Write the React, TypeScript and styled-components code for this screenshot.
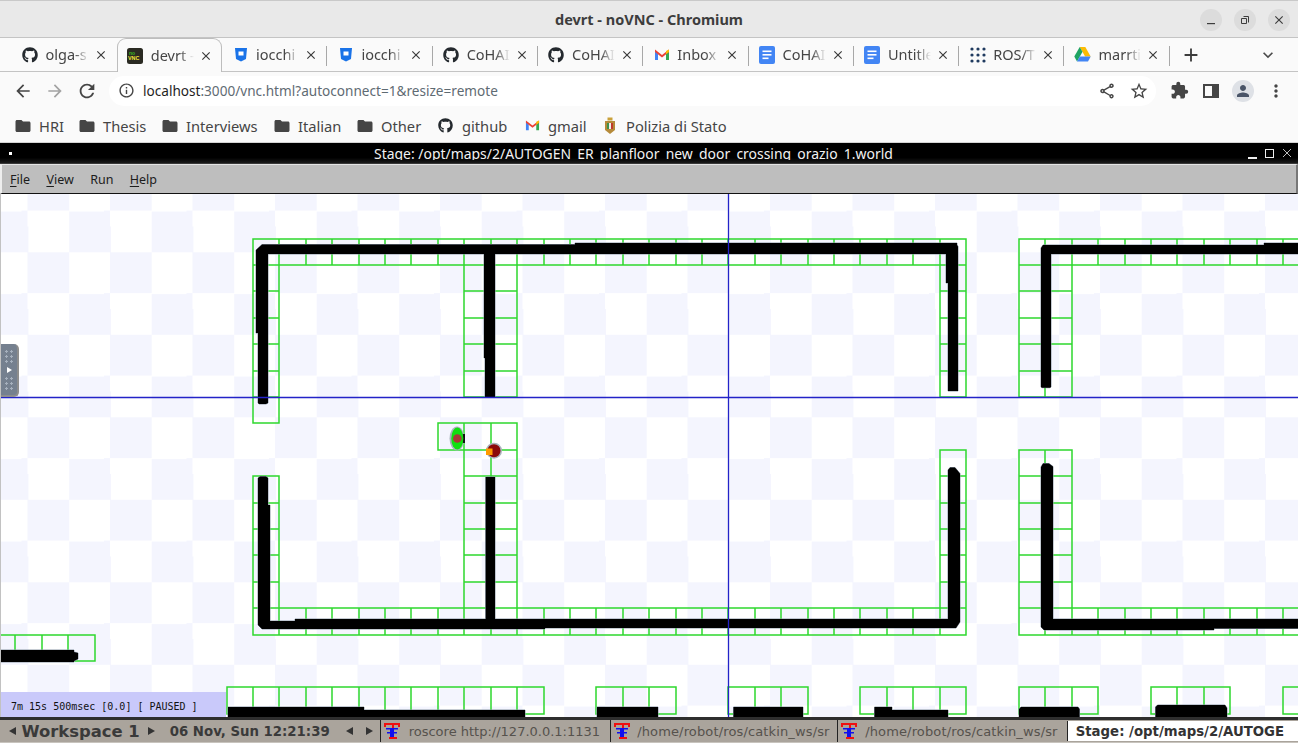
import type { ReactNode } from 'react';
import styled, { createGlobalStyle } from 'styled-components';
import { FaGithub } from 'react-icons/fa';
import {
  MdAdd,
  MdArrowBack,
  MdArrowForward,
  MdClose,
  MdExpandMore,
  MdExtension,
  MdFolder,
  MdMoreVert,
  MdOutlineInfo,
  MdOutlineShare,
  MdPerson,
  MdRefresh,
  MdStarBorder,
} from 'react-icons/md';

const UI_FONT = '"Noto Sans", "Open Sans", sans-serif';
const X11_FONT = '"DejaVu Sans", sans-serif';

const GlobalStyle = createGlobalStyle`
  html, body { margin: 0; padding: 0; background: #fff; overflow: hidden; }
  * { box-sizing: border-box; }
`;

const Screen = styled.div`
  width: 1298px;
  height: 743px;
  display: flex;
  flex-direction: column;
  overflow: hidden;
  font-family: ${UI_FONT};
`;

/* window title */
const TitleBar = styled.header`
  height: 37px;
  flex: none;
  display: flex;
  align-items: center;
  justify-content: flex-end;
  gap: 12px;
  padding: 1px 8px 0 0;
  position: relative;
  background: #e9e9e9;
  border-top: 1px solid #c9c9c9;
`;

const WindowName = styled.div`
  position: absolute;
  left: 0;
  right: 0;
  top: 9px;
  text-align: center;
  font-size: 14.5px;
  line-height: 18px;
  font-weight: 700;
  color: #3d3d3d;
`;

const RoundButton = styled.button`
  width: 22px;
  height: 22px;
  padding: 0;
  border: 0;
  border-radius: 50%;
  background: #dcdcdc;
  color: #3d3d3d;
  display: flex;
  align-items: center;
  justify-content: center;
`;

/* tabs */
const TabStrip = styled.nav`
  height: 35px;
  flex: none;
  display: flex;
  align-items: stretch;
  padding-left: 11.5px;
  background: #fafafa;
  border-top: 1px solid #c4c4c4;
  border-bottom: 1px solid #c4c4c4;
`;

const Tab = styled.div<{ $active?: boolean; $divider?: boolean }>`
  width: 105.3px;
  flex: none;
  display: flex;
  align-items: center;
  padding-left: 10px;
  position: relative;
  color: #454545;
  ${(p) =>
    p.$active
      ? `
    background: #fafafa;
    border: 1px solid #bdbdbd;
    border-bottom: 0;
    border-radius: 9px 9px 0 0;
    margin-bottom: -1px;
    padding-left: 9px;
  `
      : ''}
  ${(p) =>
    p.$divider
      ? `
    &::after {
      content: '';
      position: absolute;
      right: 0;
      top: 8px;
      bottom: 5px;
      width: 1px;
      background: #a8a8a8;
    }
  `
      : ''}
`;

const TabIcon = styled.span`
  width: 17px;
  height: 17px;
  flex: none;
  display: flex;
  align-items: center;
  justify-content: center;
  color: #24292e;
`;

const TabTitle = styled.span`
  width: 43px;
  margin: -1px 0 0 7px;
  flex: none;
  overflow: hidden;
  white-space: nowrap;
  font-size: 14.5px;
  line-height: 20px;
  mask-image: linear-gradient(to right, #000 66%, transparent 100%);
`;

const TabClose = styled.span`
  margin-left: 4px;
  width: 16px;
  height: 16px;
  display: flex;
  align-items: center;
  justify-content: center;
  color: #3a3a3a;
`;

const NewTab = styled.div`
  width: 41.5px;
  flex: none;
  display: flex;
  align-items: center;
  justify-content: center;
  color: #3c3c3c;
`;

const TabMenu = styled.div`
  margin-left: 47px;
  display: flex;
  align-items: center;
  color: #4a4a4a;
`;

/* address bar */
const Toolbar = styled.div`
  height: 37px;
  flex: none;
  display: flex;
  align-items: center;
  background: #fafafa;
  padding: 0 0 0 7px;
  color: #454545;
`;

const NavButton = styled.span<{ $muted?: boolean }>`
  width: 32px;
  height: 24px;
  flex: none;
  display: flex;
  align-items: center;
  justify-content: center;
  color: ${(p) => (p.$muted ? '#a3a3a3' : '#454545')};
`;

const Omnibox = styled.div`
  margin-left: 6px;
  width: 1047px;
  height: 30px;
  flex: none;
  display: flex;
  align-items: center;
  padding: 0 0 0 9px;
  border-radius: 15px;
  background: #fff;
`;

const Url = styled.div`
  margin-left: 8px;
  flex: 1;
  font-size: 13.6px;
  white-space: nowrap;
  color: #5f6b73;
`;

const UrlHost = styled.span`
  color: #1f1f1f;
`;

const OmniActions = styled.div`
  display: flex;
  align-items: center;
  gap: 13px;
  padding-right: 7px;
`;

const ToolActions = styled.div`
  margin-left: 7px;
  display: flex;
  align-items: center;
`;

const Avatar = styled.span`
  width: 22px;
  height: 22px;
  margin: 0 6px 0 5px;
  border-radius: 50%;
  background: #dee1e6;
  color: #4a5568;
  display: flex;
  align-items: center;
  justify-content: center;
`;

/* bookmarks */
const Bookmarks = styled.div`
  height: 34px;
  flex: none;
  display: flex;
  align-items: center;
  background: #fafafa;
  border-bottom: 1px solid #d4d4d4;
`;

const Bookmark = styled.div<{ $w: number; $gap: number }>`
  width: ${(p) => p.$w}px;
  flex: none;
  padding-left: 14px;
  display: flex;
  align-items: center;
  gap: ${(p) => p.$gap}px;
  color: #454545;
  font-size: 14.7px;
  white-space: nowrap;
`;

/* remote session */
const VncTitle = styled.div`
  height: 21px;
  flex: none;
  display: flex;
  position: relative;
  align-items: flex-start;
  background: linear-gradient(#000 0, #000 70%, #1a1a1a 95%, #555 100%);
  color: #f2f2f2;
`;

const VncDot = styled.span`
  position: absolute;
  left: 9px;
  top: 9px;
  width: 3px;
  height: 3px;
  background: #fff;
`;

const VncName = styled.div`
  margin: 3px 0 0 374px;
  height: 14px;
  overflow: hidden;
  font-size: 13.95px;
  line-height: 16px;
  white-space: nowrap;
`;

const VncButtons = styled.svg`
  position: absolute;
  right: 0;
  top: 0;
`;

const MenuBar = styled.div`
  height: 30px;
  flex: none;
  display: flex;
  align-items: center;
  gap: 16.4px;
  padding: 1px 0 0 8px;
  background: #bebebe;
  border-top: 1px solid #e4e4e4;
  border-left: 2px solid #eee;
  border-right: 2px solid #777;
  border-bottom: 1px solid #111;
  font-size: 12.5px;
  color: #1c1c1c;
`;

const MenuKey = styled.span`
  text-decoration: underline;
  text-underline-offset: 2px;
`;

const Canvas = styled.main`
  flex: 1;
  min-height: 0;
  position: relative;
  overflow: hidden;
  border-left: 1px solid #c2c2c2;
  background-color: #fff;
  background-image: repeating-conic-gradient(#f4f5fe 0 25%, #fff 0 50%);
  background-size: 82.5px 82.5px;
  background-position: -14.3px -24.2px;
`;

const MapSvg = styled.svg`
  display: block;
  width: 1298px;
  height: 523px;
  margin-left: -1px;
`;

const StatusBox = styled.div`
  position: absolute;
  left: -1px;
  bottom: 0;
  width: 226px;
  height: 25px;
  padding: 8px 0 0 11px;
  background: #c9c9fa;
  font-family: "DejaVu Sans Mono", monospace;
  font-size: 10px;
  line-height: 14px;
  color: #111;
  white-space: pre;
`;

const Handle = styled.div`
  position: absolute;
  left: 0;
  top: 150px;
  width: 18px;
  height: 53px;
  display: flex;
  flex-direction: column;
  align-items: center;
  justify-content: center;
  gap: 3px;
  background: #75808f;
  border: solid #8d8d8d;
  border-width: 0 2px 2px 0;
  border-radius: 0 5px 5px 0;
`;

const HandleGrip = styled.span`
  width: 10px;
  height: 15px;
  background-image: radial-gradient(#a6b0bd 1px, transparent 1.2px);
  background-size: 5px 5px;
`;

const HandleArrow = styled.span`
  width: 0;
  height: 0;
  border-left: 5px solid #fff;
  border-top: 3.5px solid transparent;
  border-bottom: 3.5px solid transparent;
`;

/* desktop panel */
const Panel = styled.footer`
  height: 26px;
  flex: none;
  display: flex;
  align-items: center;
  background: #aaa49c;
  border-top: 3px solid #2e2e2e;
  border-bottom: 1px solid #c8c4be;
  font-family: ${X11_FONT};
  color: #3a3a3a;
  white-space: nowrap;
`;

const PanelArrow = styled.span<{ $dir: 'left' | 'right'; $gap?: number }>`
  flex: none;
  width: 0;
  height: 0;
  margin-left: ${(p) => p.$gap ?? 0}px;
  border-top: 4.5px solid transparent;
  border-bottom: 4.5px solid transparent;
  ${(p) => (p.$dir === 'left' ? 'border-right: 7.5px solid #333;' : 'border-left: 7.5px solid #333;')}
`;

const Workspace = styled.span`
  margin-left: 6px;
  font-size: 16.4px;
  font-weight: 700;
`;

const Clock = styled.span`
  margin-left: 15px;
  font-size: 13.3px;
  font-weight: 700;
`;

const TaskList = styled.div`
  margin-left: 7px;
  flex: none;
  display: flex;
`;

const TaskItem = styled.div<{ $w: number }>`
  width: ${(p) => p.$w}px;
  flex: none;
  height: 22px;
  display: flex;
  align-items: center;
  border-left: 1px solid #222;
  padding-left: 2px;
  overflow: hidden;
  font-size: 13px;
  color: #56524d;
`;

const TaskLabel = styled.span<{ $gap: number; $track?: number }>`
  margin-left: ${(p) => p.$gap}px;
  letter-spacing: ${(p) => p.$track ?? 0}px;
`;

const ActiveTask = styled.div`
  flex: 1;
  height: 20px;
  margin-left: 1px;
  padding-left: 8px;
  display: flex;
  align-items: center;
  overflow: hidden;
  background: #fff;
  border-left: 1px solid #222;
  font-size: 13.3px;
  font-weight: 700;
  color: #333;
`;

/* icons */
const ShieldIcon = () => (
  <svg width="14" height="15" viewBox="0 0 14 15">
    <path d="M1 1h12l-1 11-5 2.5L2 12z" fill="#1a73e8" />
    <rect x="4.5" y="4.5" width="5" height="4" fill="#fff" />
  </svg>
);

const NoVncIcon = () => (
  <svg width="16" height="16" viewBox="0 0 16 16">
    <rect width="16" height="16" rx="2.5" fill="#2a2a22" />
    <text x="2" y="6.5" fontSize="5" fontWeight="700" fontFamily="Liberation Sans" fill="#3cb521">
      no
    </text>
    <text x="1" y="12" fontSize="5.4" fontWeight="700" fontFamily="Liberation Sans" fill="#f4e93a">
      VNC
    </text>
  </svg>
);

const GmailIcon = ({ size = 16 }: { size?: number }) => (
  <svg width={size} height={size} viewBox="0 0 16 16">
    <path d="M1 4v9h3V7z" fill="#4285f4" />
    <path d="M12 7v6h3V4z" fill="#34a853" />
    <path d="M1 2.6 8 8l7-5.4V5L8 10.5 1 5z" fill="#ea4335" />
    <path d="M12 3.9 15 2.6V5l-3 2.3z" fill="#fbbc04" />
  </svg>
);

const DocsIcon = () => (
  <svg width="16" height="18" viewBox="0 0 16 18">
    <rect width="16" height="18" rx="2" fill="#4285f4" />
    <rect x="3.5" y="4.5" width="9" height="1.6" fill="#fff" />
    <rect x="3.5" y="8" width="9" height="1.6" fill="#fff" />
    <rect x="3.5" y="11.5" width="6" height="1.6" fill="#fff" />
  </svg>
);

const DotsIcon = () => (
  <svg width="16" height="16" viewBox="0 0 16 16" fill="#1f3a5f">
    {[2, 8, 14].flatMap((y) =>
      [2, 8, 14].map((x) => <circle key={`${x}-${y}`} cx={x} cy={y} r="1.6" />),
    )}
  </svg>
);

const DriveIcon = () => (
  <svg width="17" height="15" viewBox="0 0 17 15">
    <path d="M5.7 0h5.6l5.4 9.6h-5.6z" fill="#fbbc04" />
    <path d="M5.7 0 0.3 9.6 3 14.5l5.5-9.7z" fill="#1fa463" />
    <path d="M5.8 9.6h10.9L14 14.5H3z" fill="#4285f4" />
  </svg>
);

const CrestIcon = () => (
  <svg width="12" height="18" viewBox="0 0 12 18">
    <rect x="3.5" y="0.5" width="5" height="3" fill="#c9a13b" />
    <path d="M1 4h10v9l-5 4-5-4z" fill="#b58a3a" />
    <rect x="3" y="6" width="2" height="6" fill="#3f8f4a" />
    <rect x="5" y="6" width="2" height="6" fill="#eee" />
    <rect x="7" y="6" width="2" height="6" fill="#c0392b" />
  </svg>
);

const SidePanelIcon = () => (
  <svg width="16" height="14" viewBox="0 0 16 14">
    <path d="M0 0h16v14H0zM2 2v10h7V2z" fill="#454545" fillRule="evenodd" />
  </svg>
);

const XtermIcon = () => (
  <svg width="18" height="18" viewBox="0 0 18 18">
    <path d="M1 1h16v4h-2V3h-4v12h3v2H6v-2h3V3H3v2H1z" fill="#f01010" />
    <path d="M3 6h12v1.500h-4V15H7V7.500H3z" fill="#1010ee" />
    <rect x="4" y="10" width="10" height="1.500" fill="#1010ee" />
  </svg>
);

/* map */
const gx = (n: number) => Math.round(253 + 26.41 * n);
const gy = (m: number) => Math.round(238.5 + 26.4 * m);

// [first col, last col (exclusive), first row, last row (exclusive)]
const GRID_BLOCKS: [number, number, number, number][] = [
  [0, 27, 0, 1],
  [0, 1, 1, 7],
  [8, 10, 1, 6],
  [26, 27, 1, 6],
  [29, 40, 0, 1],
  [29, 31, 1, 6],
  [7, 10, 7, 8],
  [8, 10, 8, 15],
  [0, 1, 9, 15],
  [0, 27, 14, 15],
  [26, 27, 8, 15],
  [29, 31, 8, 15],
  [29, 40, 14, 15],
  [-10, -6, 15, 16],
  [-1, 11, 17, 18],
  [13, 16, 17, 18],
  [18, 21, 17, 18],
  [23, 27, 17, 18],
  [29, 32, 17, 18],
  [34, 37, 17, 18],
  [39, 40, 17, 18],
];

const WALLS: string[] = [
  // upper left room
  'M256 333V250l6-5.500H575v-1.500H957v2l1 1.500V391H948V283H946V254H268V403l-2 1h-7l-1-1V333z',
  'M484 254H495V397H485V358H484z',
  // upper right room
  'M1041 387V248l2-3H1264v-2H1298V254H1051V387l-1 .7h-8z',
  // lower left room
  'M258 478l2-1.500h6l2 1.500V505h2V621H295V619H948V628H545v1H262l-4-4z',
  'M485.700 477H495V620H485.700z',
  // lower right room
  'M948 470l2-2.500h5l5 6V622l-4 6-8 0zM1041 467l2-3.500h6l4 3V619H1298V628.500H1214V630H1044l-3-3z',
  // bottom strips
  'M0 650H74V652L78 653V659L74 661V662H0z',
  'M228 707H364V710H525V717H228z',
  'M597 707H658V717H597z',
  'M733.500 707H803V717H733.500z',
  'M874.500 707H892V710H948V717H874.500z',
  'M1019 709l2-2H1078l1.500 2V717H1019z',
  'M1155.500 707l2-2H1225l2 3V717H1155.500z',
];

const GridLines = () => {
  const lines: string[] = [];
  GRID_BLOCKS.forEach(([c0, c1, r0, r1]) => {
    for (let c = c0; c <= c1; c += 1) lines.push(`M${gx(c)} ${gy(r0)}V${gy(r1)}`);
    for (let r = r0; r <= r1; r += 1) lines.push(`M${gx(c0)} ${gy(r)}H${gx(c1)}`);
  });
  return <path d={lines.join('')} stroke="#2ed82e" strokeWidth="1.500" fill="none" strokeLinecap="square" />;
};

const SimMap = () => (
  <MapSvg viewBox="0 194 1298 523">
    <GridLines />
    <path d={WALLS.join('')} stroke="#8b97a5" strokeWidth="1" fill="none" />
    <path d={WALLS.join('')} fill="#000" />
    <path d="M728.500 194V717M0 397.500H1298" stroke="#2323c8" strokeWidth="1.300" fill="none" />
    <ellipse cx="457" cy="438.500" rx="7.500" ry="12" fill="#a9b2bb" />
    <rect x="462.500" y="434" width="2.500" height="9" fill="#111" />
    <ellipse cx="457.300" cy="438.500" rx="6" ry="11" fill="#10e010" />
    <circle cx="457.300" cy="438.500" r="4.300" fill="#a83838" />
    <circle cx="494" cy="450.700" r="8" fill="#a9b2bb" />
    <circle cx="494" cy="450.700" r="6.500" fill="#8c0a0a" />
    <rect x="486" y="448.500" width="6.500" height="6.500" fill="#ff9a00" />
  </MapSvg>
);

const TABS: { title: string; icon: ReactNode }[] = [
  { title: 'olga-s', icon: <FaGithub size={16} /> },
  { title: 'devrt -', icon: <NoVncIcon /> },
  { title: 'iocchi', icon: <ShieldIcon /> },
  { title: 'iocchi', icon: <ShieldIcon /> },
  { title: 'CoHAI', icon: <FaGithub size={16} /> },
  { title: 'CoHAI', icon: <FaGithub size={16} /> },
  { title: 'Inbox', icon: <GmailIcon /> },
  { title: 'CoHAI', icon: <DocsIcon /> },
  { title: 'Untitle', icon: <DocsIcon /> },
  { title: 'ROS/T', icon: <DotsIcon /> },
  { title: 'marrti', icon: <DriveIcon /> },
];

const BOOKMARKS: { label: string; width: number; gap: number; icon: ReactNode }[] = [
  { label: 'HRI', width: 64, gap: 7, icon: <MdFolder size={18} /> },
  { label: 'Thesis', width: 83, gap: 7, icon: <MdFolder size={18} /> },
  { label: 'Interviews', width: 112, gap: 7, icon: <MdFolder size={18} /> },
  { label: 'Italian', width: 83, gap: 7, icon: <MdFolder size={18} /> },
  { label: 'Other', width: 82, gap: 7, icon: <MdFolder size={18} /> },
  { label: 'github', width: 87, gap: 9, icon: <FaGithub size={15} color="#24292e" /> },
  { label: 'gmail', width: 79, gap: 8, icon: <GmailIcon size={15} /> },
  { label: 'Polizia di Stato', width: 160, gap: 10, icon: <CrestIcon /> },
];

export default function App() {
  return (
    <Screen>
      <GlobalStyle />
      <TitleBar>
        <WindowName>devrt - noVNC - Chromium</WindowName>
        <RoundButton>
          <svg width="10" height="10" viewBox="0 0 10 10">
            <rect x="1" y="8" width="8" height="1.200" fill="#3d3d3d" />
          </svg>
        </RoundButton>
        <RoundButton>
          <svg width="10" height="10" viewBox="0 0 10 10" fill="none" stroke="#3d3d3d">
            <path d="M3.500 1.500h5v6M1.500 3.500h5v5h-5z" />
          </svg>
        </RoundButton>
        <RoundButton>
          <MdClose size={14} />
        </RoundButton>
      </TitleBar>

      <TabStrip>
        {TABS.map((tab, i) => (
          <Tab key={`${tab.title}-${i}`} $active={i === 1} $divider={i > 1}>
            <TabIcon>{tab.icon}</TabIcon>
            <TabTitle>{tab.title}</TabTitle>
            <TabClose>
              <MdClose size={14} />
            </TabClose>
          </Tab>
        ))}
        <NewTab>
          <MdAdd size={22} />
        </NewTab>
        <TabMenu>
          <MdExpandMore size={20} />
        </TabMenu>
      </TabStrip>

      <Toolbar>
        <NavButton>
          <MdArrowBack size={20} />
        </NavButton>
        <NavButton $muted>
          <MdArrowForward size={20} />
        </NavButton>
        <NavButton>
          <MdRefresh size={22} />
        </NavButton>
        <Omnibox>
          <MdOutlineInfo size={17} />
          <Url>
            <UrlHost>localhost</UrlHost>:3000/vnc.html?autoconnect=1&amp;resize=remote
          </Url>
          <OmniActions>
            <MdOutlineShare size={18} />
            <MdStarBorder size={20} />
          </OmniActions>
        </Omnibox>
        <ToolActions>
          <NavButton>
            <MdExtension size={19} />
          </NavButton>
          <NavButton>
            <SidePanelIcon />
          </NavButton>
          <Avatar>
            <MdPerson size={18} />
          </Avatar>
          <NavButton>
            <MdMoreVert size={20} />
          </NavButton>
        </ToolActions>
      </Toolbar>

      <Bookmarks>
        {BOOKMARKS.map((b) => (
          <Bookmark key={b.label} $w={b.width} $gap={b.gap}>
            {b.icon}
            {b.label}
          </Bookmark>
        ))}
      </Bookmarks>

      <VncTitle>
        <VncDot />
        <VncName>Stage: /opt/maps/2/AUTOGEN_ER_planfloor_new_door_crossing_orazio_1.world</VncName>
        <VncButtons width="60" height="21" viewBox="0 0 60 21">
          <rect x="10" y="14" width="9" height="2" fill="#eee" />
          <rect x="27.500" y="6.500" width="8" height="8" fill="none" stroke="#eee" />
          <path d="M45 6l8 8M53 6l-8 8" stroke="#eee" strokeWidth="0.800" />
        </VncButtons>
      </VncTitle>

      <MenuBar>
        <span>
          <MenuKey>F</MenuKey>ile
        </span>
        <span>
          <MenuKey>V</MenuKey>iew
        </span>
        <span>Run</span>
        <span>
          <MenuKey>H</MenuKey>elp
        </span>
      </MenuBar>

      <Canvas>
        <SimMap />
        <Handle>
          <HandleGrip />
          <HandleArrow />
          <HandleGrip />
        </Handle>
        <StatusBox>7m 15s 500msec [0.0] [ PAUSED ]</StatusBox>
      </Canvas>

      <Panel>
        <PanelArrow $dir="left" $gap={8.5} />
        <Workspace>Workspace 1</Workspace>
        <PanelArrow $dir="right" $gap={8} />
        <Clock>06 Nov, Sun 12:21:39</Clock>
        <PanelArrow $dir="left" $gap={16} />
        <PanelArrow $dir="right" $gap={13} />
        <TaskList>
          <TaskItem $w={230}>
            <XtermIcon />
            <TaskLabel $gap={8}>roscore http://127.0.0.1:1131</TaskLabel>
          </TaskItem>
          <TaskItem $w={227.5}>
            <XtermIcon />
            <TaskLabel $gap={6.5} $track={0.14}>/home/robot/ros/catkin_ws/sr</TaskLabel>
          </TaskItem>
          <TaskItem $w={228.5}>
            <XtermIcon />
            <TaskLabel $gap={7} $track={0.14}>/home/robot/ros/catkin_ws/sr</TaskLabel>
          </TaskItem>
        </TaskList>
        <ActiveTask>Stage: /opt/maps/2/AUTOGE</ActiveTask>
      </Panel>
    </Screen>
  );
}
